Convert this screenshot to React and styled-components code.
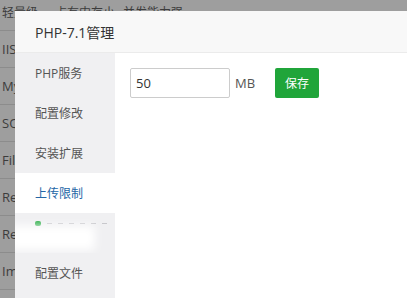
import React from 'react';
import styled, { createGlobalStyle } from 'styled-components';

const Global = createGlobalStyle`
  html, body { margin: 0; padding: 0; }
  body {
    width: 407px;
    height: 298px;
    overflow: hidden;
    font-family: "Open Sans", "Noto Sans CJK SC", sans-serif;
    background: #9e9e9e;
  }
`;

const Page = styled.div`
  position: relative;
  width: 407px;
  height: 298px;
  overflow: hidden;
  background: #9e9e9e;
`;

const Backdrop = styled.div`
  display: flex;
  flex-direction: column;
  margin-top: -6px;
`;

const BackRow = styled.div`
  height: 37px;
  box-sizing: border-box;
  border-bottom: 1px solid #8c8c8c;
  display: flex;
  align-items: center;
  padding-left: 2px;
  font-size: 13px;
  color: #3c3c3c;
  white-space: nowrap;
`;

const BackCell = styled.span`
  font-size: ${p => (p.$small ? '12px' : '13px')};
  margin-left: ${p => p.$offset || 0}px;
`;

const Modal = styled.div`
  position: absolute;
  left: 15px;
  top: 11px;
  width: 430px;
  height: 300px;
  background: #fff;
  display: flex;
  flex-direction: column;
`;

const Header = styled.div`
  height: 41px;
  flex: none;
  background: #f8f8f8;
  border-bottom: 1px solid #ebebeb;
  display: flex;
  align-items: center;
  padding-left: 20px;
  font-size: 14px;
  color: #333;
`;

const Body = styled.div`
  flex: 1;
  display: flex;
`;

const Menu = styled.div`
  width: 100px;
  flex: none;
  background: #f0f0f2;
  display: flex;
  flex-direction: column;
`;

const MenuItem = styled.div`
  height: 40px;
  display: flex;
  align-items: center;
  padding-left: 20px;
  font-size: 12px;
  color: ${p => (p.$active ? '#2466a6' : '#555')};
  background: ${p => (p.$active ? '#fff' : 'transparent')};
  position: relative;
  overflow: hidden;
`;

const Smear = styled.div`
  position: absolute;
  left: -6px;
  top: 13px;
  width: 86px;
  height: 24px;
  background: #fff;
  filter: blur(5px);
`;

const Dots = styled.div`
  position: absolute;
  left: 20px;
  top: 8px;
  display: flex;
  align-items: center;
  gap: 6px;
`;

const GreenDot = styled.span`
  width: 6px;
  height: 5px;
  border-radius: 2px;
  background: #2fae4a;
`;

const Dash = styled.span`
  width: 5px;
  height: 1px;
  background: #c8c8cc;
`;

const Content = styled.div`
  flex: 1;
  padding: 15px 15px;
  display: flex;
  align-items: flex-start;
`;

const Input = styled.input`
  width: 100px;
  height: 30px;
  box-sizing: border-box;
  border: 1px solid #ccc;
  border-radius: 2px;
  padding: 0 5px;
  font-family: inherit;
  font-size: 13px;
  color: #333;
  outline: none;
`;

const Unit = styled.span`
  height: 30px;
  line-height: 30px;
  margin-left: 5px;
  font-size: 13px;
  color: #555;
`;

const SaveButton = styled.button`
  height: 30px;
  margin-left: 20px;
  padding: 0 10px;
  border: none;
  border-radius: 2px;
  background: #20a53a;
  color: #fff;
  font-family: inherit;
  font-size: 12px;
  cursor: pointer;
`;

const rows = ['IIS', 'MySQL', 'SQL', 'FileZilla', 'Redis', 'Redis', 'Img', ''];

export default function App() {
  return (
    <Page>
      <Global />
      <Backdrop>
        <BackRow>
          <BackCell $small>轻量级</BackCell>
          <BackCell $small $offset={17}>占有内存小</BackCell>
          <BackCell $small $offset={8}>并发能力强</BackCell>
        </BackRow>
        {rows.map((t, i) => (
          <BackRow key={i}>
            <BackCell>{t}</BackCell>
          </BackRow>
        ))}
      </Backdrop>
      <Modal>
        <Header>PHP-7.1管理</Header>
        <Body>
          <Menu>
            <MenuItem>PHP服务</MenuItem>
            <MenuItem>配置修改</MenuItem>
            <MenuItem>安装扩展</MenuItem>
            <MenuItem $active>上传限制</MenuItem>
            <MenuItem>
              <Dots>
                <GreenDot />
                <Dash /><Dash /><Dash /><Dash /><Dash /><Dash />
              </Dots>
              <Smear />
            </MenuItem>
            <MenuItem>配置文件</MenuItem>
          </Menu>
          <Content>
            <Input defaultValue="50" />
            <Unit>MB</Unit>
            <SaveButton>保存</SaveButton>
          </Content>
        </Body>
      </Modal>
    </Page>
  );
}
